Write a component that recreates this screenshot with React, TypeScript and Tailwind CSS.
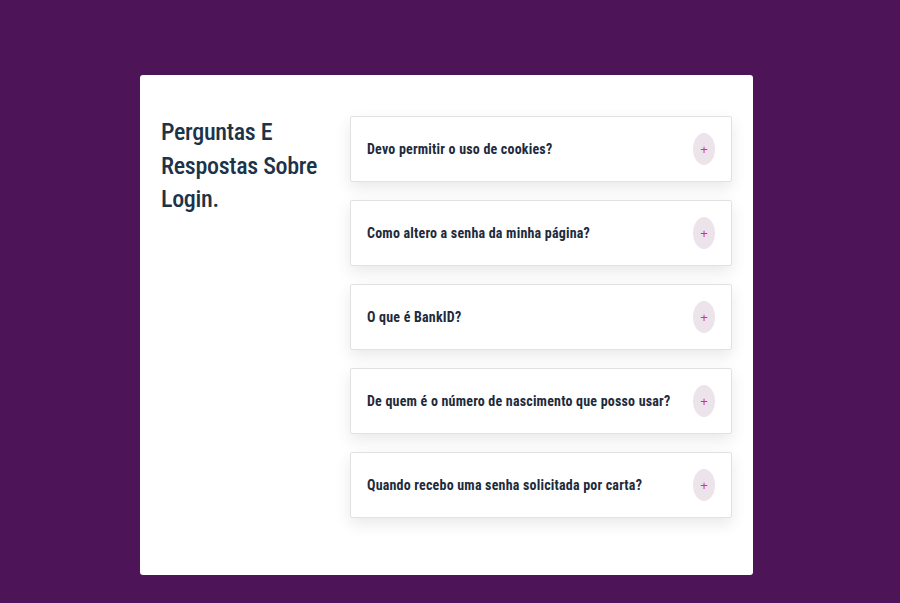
import React from "react";

const questions = [
  "Devo permitir o uso de cookies?",
  "Como altero a senha da minha página?",
  "O que é BankID?",
  "De quem é o número de nascimento que posso usar?",
  "Quando recebo uma senha solicitada por carta?",
];

function Plus() {
  return (
    <span className="w-[22px] h-[32px] rounded-[50%] bg-[#ece4ea] flex items-center justify-center shrink-0 text-[13px] leading-none font-light text-[#d6336f] font-['Liberation_Sans',sans-serif]">
      +
    </span>
  );
}

export default function App() {
  return (
    <div className="w-[900px] h-[603px] bg-[#4d1457] pt-[75px] pl-[140px] font-['Roboto_Condensed','Liberation_Sans',sans-serif]">
      <div className="w-[613px] h-[500px] bg-white rounded-[3px] flex pl-[21px] pt-[41px]">
        <div className="w-[189px] shrink-0">
          <h2 className="text-[24px] leading-[33.5px] font-medium text-[#1d3349] tracking-[-0.3px]">
            Perguntas E Respostas Sobre Login.
          </h2>
        </div>
        <div className="w-[382px] flex flex-col gap-[18px]">
          {questions.map((q) => (
            <div
              key={q}
              className="h-[66px] border border-[#e2e2e5] rounded-[2px] bg-white shadow-[0_6px_16px_rgba(0,0,0,0.09)] flex items-center justify-between pl-[16px] pr-[16px]"
            >
              <span className="text-[14px] font-bold text-[#1d2b3c] tracking-[0.2px]">{q}</span>
              <Plus />
            </div>
          ))}
        </div>
      </div>
    </div>
  );
}
